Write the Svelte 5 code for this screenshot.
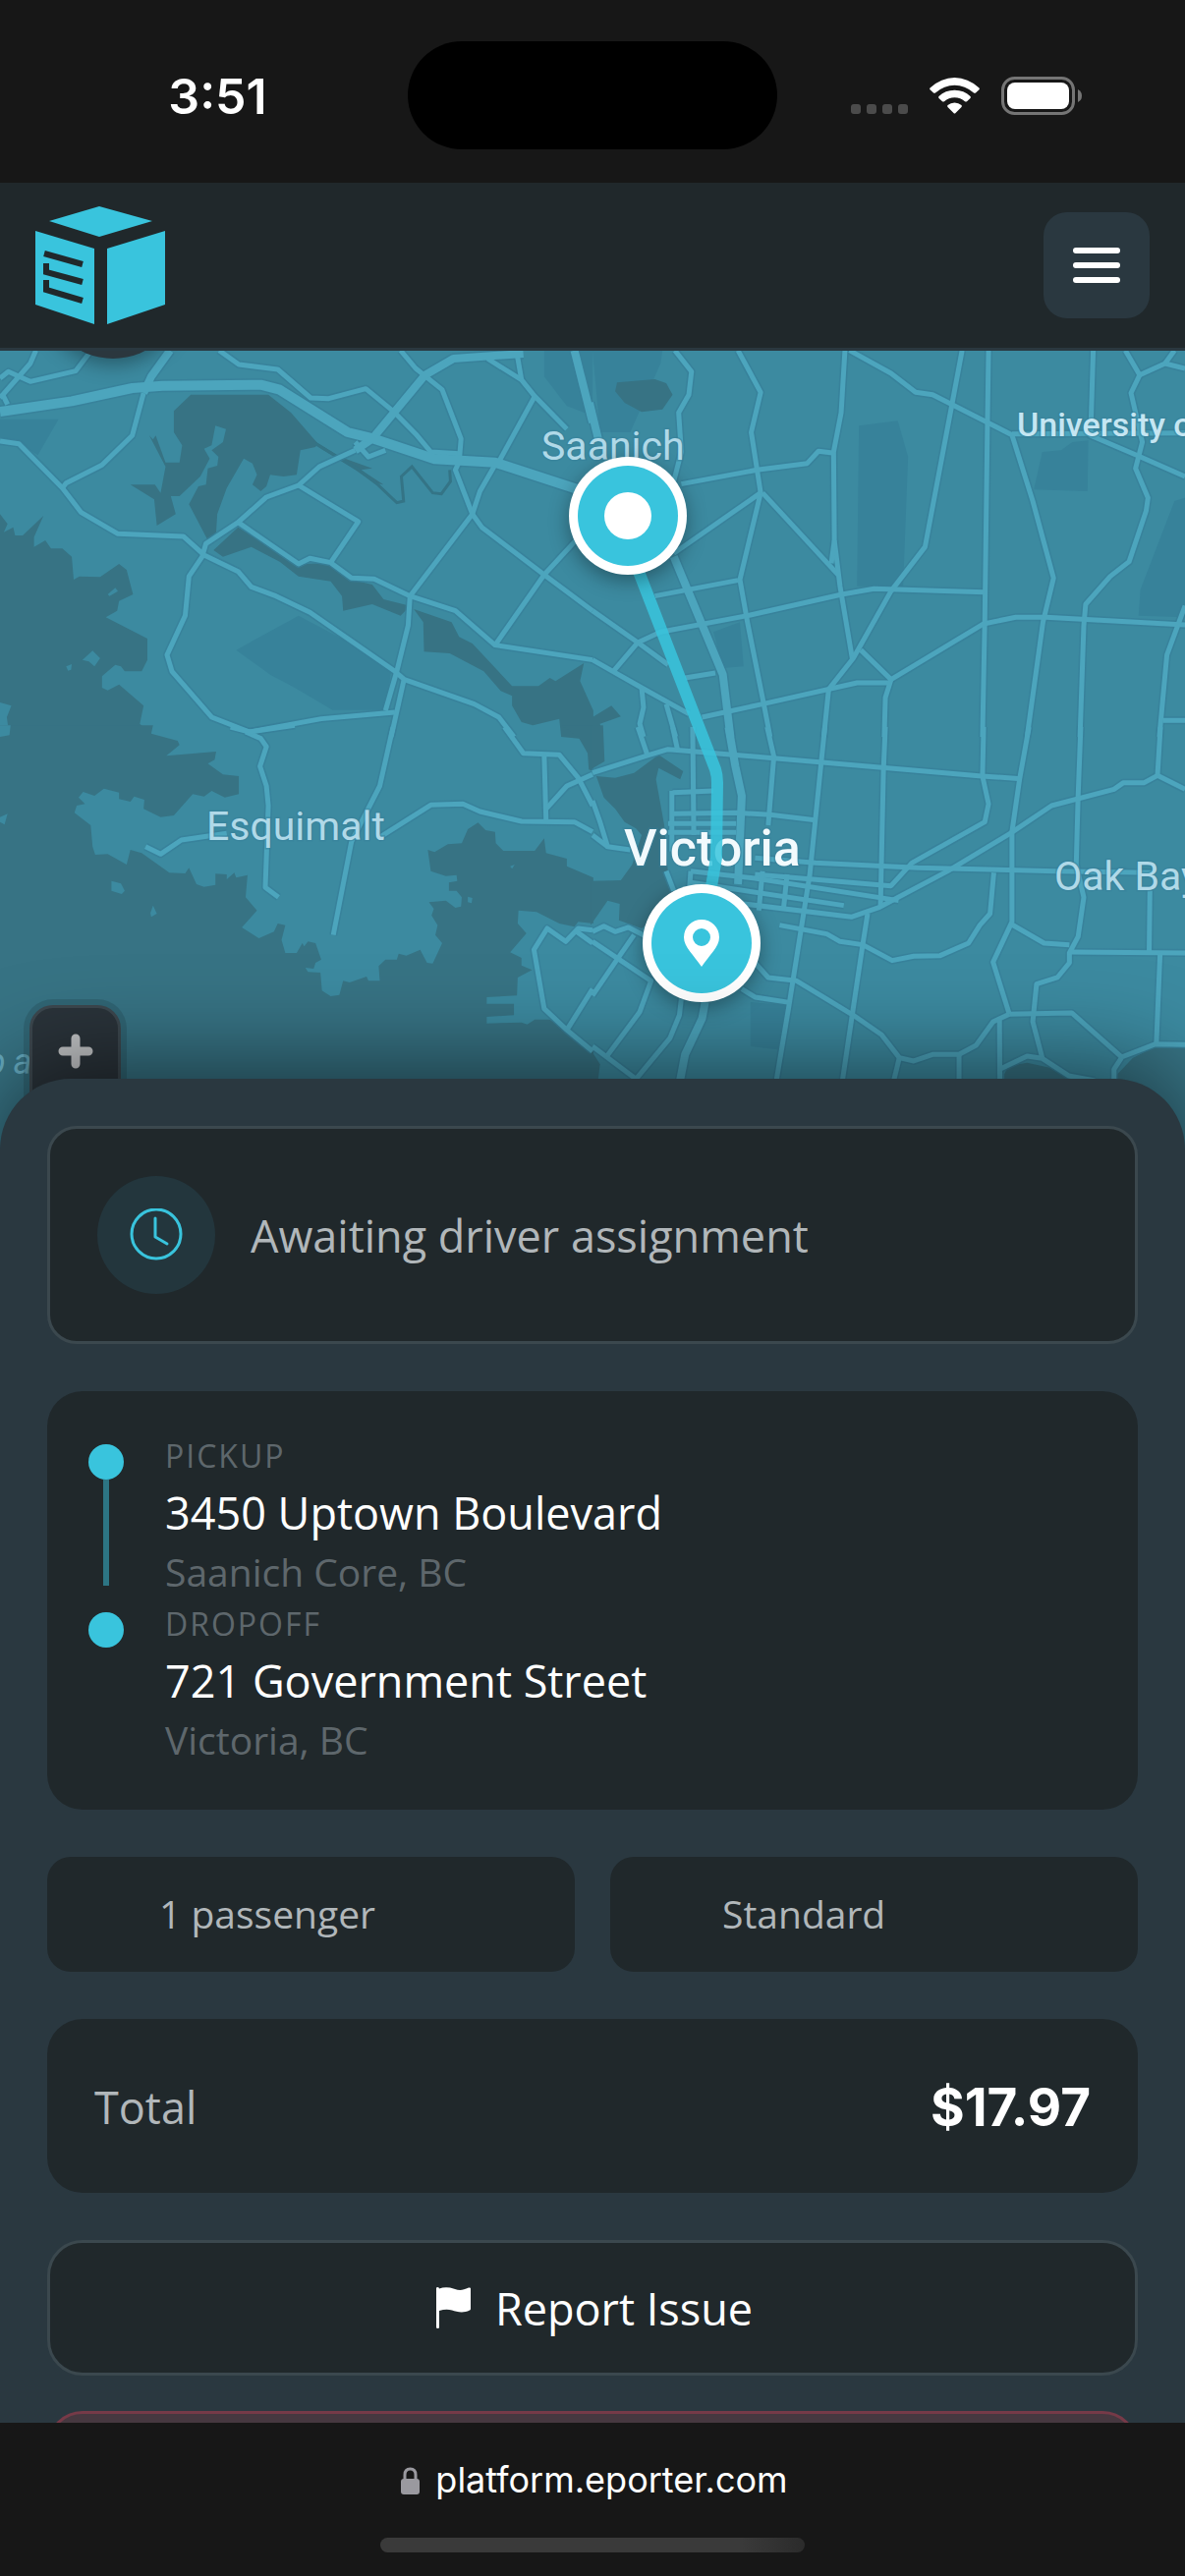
<script>
// the map is stored as tiles, each with its own grid (2.6 x 3 units per pixel)
const tiles = [
    {
        x: 0, y: -7,
        water: [
            "505,155 460,205 460,270 482,310 475,362 438,362 412,280 405,292 395,280 438,375 425,455 410,430 345,430 408,475 415,555 465,520 452,465 475,465 530,405 555,350 540,320 560,310 570,250 598,260 590,300 560,325 578,345 575,372 550,380 545,430 525,435 500,490 550,600 572,575 575,520 600,440 645,350 668,365 680,400 668,430 690,450 705,435 715,400 750,405 785,400 795,325 835,315 840,303 770,210 710,155",
            "565,630 590,650 665,620 740,665 790,710 875,725 905,770 908,815 985,795 1060,830 1085,800 1015,780 985,735 930,720 870,670 790,672 630,560",
            "1095,810 1195,850 1215,895 1250,915 1355,1045 1425,1045 1455,1020 1470,1030 1545,975 1535,1030 1570,1120 1570,1210 1485,1200 1480,1145 1410,1165 1380,1155 1355,1105 1355,1075 1325,1060 1280,1000 1190,945 1122,940 1120,850",
            "0,520 20,550 10,575 35,560 40,585 60,585 115,525 90,590 90,620 120,600 135,625 165,625 190,650 195,720 210,710 265,712 315,672 335,690 352,765 315,785 310,815 280,835 390,900 390,965 375,1000 330,1000 320,985 305,980 270,1015 270,1050 285,1058 315,1040 380,1105 370,1160 410,1200 0,1200",
            "830,295 900,345 985,380 955,385 1015,430 990,425 940,385 850,320"
        ],
        creeks: ["835,305 950,385 1000,430 1050,485 1068,480 1062,405 1090,375 1145,455 1168,458 1192,420 1190,385"],
        islands: ["285,765 305,745 312,755 290,770", "218,965 245,937 265,960 250,985 235,970", "175,985 190,978 188,995 180,998", "0,1095 30,1105 18,1140 25,1200 0,1200"],
        parks: ["625,935 790,830 920,910 1035,1000 1020,1118 880,1118 780,1050 715,1010", "0,230 155,230 100,340 50,300 0,285", "1440,20 1568,20 1568,220 1500,190 1440,100"],
        highways: ["0,207 190,175 350,135 430,128 690,125 740,140 920,270 990,290 1150,352 1310,362 1570,460"],
        avenues: ["1385,30 1200,45 1125,95 985,290 940,325", "1520,20 1568,240", "450,20 400,100 380,150"],
        roads: [
            "95,20 80,60 0,165", "0,105 22,85 80,115 200,83 235,30", "5,150 20,185",
            "380,150 350,280 270,370 175,425 165,440",
            "0,297 50,305 165,440 215,515 312,580 485,588 540,645 630,695 665,742 730,770 820,820 1045,1000 1070,1025 1255,1100 1320,1140 1360,1200",
            "580,20 632,63 735,78 822,165 870,167 968,137 1040,205 1100,275 1140,330 1215,335",
            "940,325 845,375 790,432 705,468 630,545 545,610 535,650 500,710 490,830 442,950 455,1000 560,1140 660,1185",
            "1060,20 1100,75 1170,140 1220,290 1215,360 1205,385 1250,520 1275,560 1440,705 1568,815",
            "1290,45 1380,110 1415,160 1500,260", "1368,30 1380,110", "1415,160 1320,360",
            "1310,370 1270,450 1250,520 1085,770 1080,860 1050,1000 1020,1120",
            "1085,770 1205,815 1310,920 1568,965", "1310,920 1440,705 1568,545",
            "630,545 790,672 820,655 875,668 930,715 990,718 1085,770",
            "790,432 948,543 875,668", "1070,1020 1035,1200", "660,1185 850,1145 1045,1125", "940,300 975,345 1020,325"
        ]
    },
    {
        x: 603, y: -7,
        water: ["65,118 165,108 195,120 212,155 185,200 130,208 85,180 60,145", "0,1140 50,1105 75,1138 20,1160 25,1200 0,1200"],
        creeks: [],
        islands: [],
        parks: ["705,250 808,235 835,345 822,740 700,740", "1190,330 1240,325 1270,300 1312,295 1310,450 1168,445", "1540,480 1568,470 1568,835 1445,830 1450,750", "320,880 390,850 400,985 345,990", "0,20 185,20 180,60 100,270 20,270"],
        highways: [],
        avenues: ["215,650 345,1010 365,1200", "-8,180 15,290"],
        roads: [
            "218,20 262,85 255,155 228,210 235,330 215,420",
            "385,20 445,148 420,270 445,455 390,720 410,850 455,1110 470,1200",
            "235,428 435,385 568,365 598,328 635,333", "445,455 215,640", "450,455 650,705",
            "668,20 658,210 638,330 640,600 655,740 688,965", "640,600 632,670",
            "680,20 790,90 855,148 900,155 1045,240 1110,278 1165,480 1220,715 1192,850 1150,1200",
            "978,20 952,180 880,620 790,755 690,960 625,1055 612,1200",
            "1048,20 1045,250 1038,850 1032,1200", "1325,20 1318,280 1450,345 1568,405",
            "1410,20 1448,95 1425,150 1455,300 1437,380 1470,470 1465,510 1420,665 1370,710 1305,795 1300,860 1290,1200",
            "1448,95 1515,60 1568,75", "1515,60 1540,20", "1110,275 1568,272", "165,770 385,722",
            "0,965 130,1050 255,1130", "0,815 120,912 200,980",
            "55,1000 120,912 180,880 410,830 660,765 745,748 1035,758", "245,1020 325,1005",
            "290,1140 450,1100 700,1035 785,1035", "710,935 790,1025 1035,855 1120,835 1200,835 1568,858",
            "790,1025 775,1080 772,1200", "130,1050 135,1110 125,1160 135,1200", "195,1100 220,1200",
            "1568,800 1520,950 1500,1200", "1510,1150 1568,1150"
        ]
    },
    {
        x: 0, y: 383,
        water: [
            "0,-5 405,-5 400,20 470,42 475,55 440,88 572,75 568,100 550,112 590,145 632,150 632,205 595,215 560,195 540,212 510,205 460,270 425,275 380,250 382,222 355,212 345,228 315,220 315,200 275,188 250,210 220,198 208,215 225,235 203,240 197,262 240,300 245,365 252,390 285,388 335,420 345,375 375,385 448,445 490,447 500,430 520,480 540,488 570,482 570,448 600,450 600,465 620,445 625,460 655,452 650,520 680,560 640,612 685,645 725,625 735,600 755,605 745,650 755,690 785,690 800,660 805,670 815,655 835,660 850,710 835,720 830,738 808,735 815,748 848,750 852,805 875,822 898,818 908,775 925,780 970,762 975,775 1005,775 1002,730 1020,710 1050,710 1055,692 1075,698 1112,680 1130,720 1145,722 1170,660 1152,635 1158,605 1142,575 1148,555 1135,535 1180,530 1205,552 1220,548 1222,520 1208,500 1188,500 1188,475 1210,470 1208,452 1180,455 1140,440 1132,375 1150,382 1185,358 1222,355 1238,312 1265,292 1285,315 1310,320 1312,355 1332,378 1415,378 1440,340 1445,385 1500,402 1500,425 1570,460 1570,600 1530,595 1520,610 1480,600 1420,565 1372,560 1370,600 1393,630 1350,688 1380,705 1380,728 1408,742 1370,765 1368,820 1288,825 1288,845 1360,845 1360,880 1288,885 1288,905 1380,902 1395,908 1415,893 1455,893 1570,990 1570,1320 0,1320",
            "1485,-5 1530,30 1555,80 1558,130 1570,135 1570,-5"
        ],
        creeks: [],
        islands: ["295,470 320,478 330,500 322,510 295,500", "405,545 415,570 400,580 398,568", "0,275 20,265 12,298 0,290", "1350,425 1362,420 1355,433", "1238,518 1250,522 1248,538 1238,535", "0,-5 28,-5 25,25 0,30"],
        parks: [],
        highways: [],
        avenues: [],
        roads: [
            "650,15 690,35 705,60 688,120 705,180 710,240 702,490 737,520",
            "385,365 425,388 480,345 600,325", "1000,340 1140,238 1225,235 1270,258 1380,288 1520,290 1568,320",
            "1040,0 1005,180 930,350 882,635", "610,0 660,15 780,-5",
            "1335,0 1385,80 1480,85 1530,155 1568,240", "1440,85 1445,285", "1445,250 1500,180 1568,145",
            "1568,620 1530,615 1497,655 1448,615 1413,680 1440,860 1500,925 1568,990", "1500,925 1568,800", "1520,620 1568,660"
        ]
    },
    {
        x: 603, y: 383,
        water: [
            "-5,-5 28,-5 32,105 -5,130",
            "10,150 60,155 110,140 175,85 240,135 232,160 175,125 168,160 190,300 200,450 215,500 160,590 130,615 70,590 72,540 40,530 -5,605 -5,470 75,468 105,420 130,330 115,310 85,290 60,250 30,215",
            "1100,1035 1150,1025 1210,1040 1260,1075 1260,1200 1090,1200 1090,1060",
            "1385,1065 1430,1010 1500,970 1568,980 1568,1320 1385,1320",
            "-5,985 20,1030 15,1075 -5,1075"
        ],
        creeks: [],
        islands: [],
        parks: ["418,840 520,850 490,985 418,975"],
        highways: [],
        avenues: ["360,0 378,120 395,210 385,480", "298,840 290,890 245,1000 230,1090"],
        roads: [
            "0,140 150,85 200,68 480,95 1030,150 1135,158", "120,0 145,85", "212,0 225,70", "265,0 268,330",
            "462,0 480,90 465,300", "615,0 605,110 575,450 520,850 485,1090", "775,0 770,130 762,550",
            "1035,0 1032,150 1048,235 1038,290 845,415 790,485 430,450",
            "1155,0 1130,160 1110,320 1110,595 1060,718 1103,877",
            "1292,0 1285,210 1280,420 1300,520 1285,640 1262,690 1262,720 1230,765 1175,785 1165,900 1190,1010",
            "1503,0 1495,148 1568,190",
            "1495,148 1460,170 1405,170 1380,190 1215,240 1105,325 940,440 760,550 685,580 400,540",
            "212,200 320,195", "210,195 210,380", "215,265 380,262 470,268 595,285", "200,295 380,295", "200,322 380,322",
            "430,400 590,415 860,430 1225,440", "1225,440 1480,445", "260,440 430,462 810,530", "260,475 665,545",
            "450,440 440,560", "515,450 505,560", "260,440 255,520",
            "1062,445 1052,570 1025,605 995,660 920,698 850,700 793,713 715,665 655,655 620,632 495,605",
            "728,570 715,665 660,1090", "1475,500 1473,688", "1105,600 1195,660 1262,665", "1262,687 1568,690", "1502,690 1492,968",
            "1103,877 1268,873 1400,1008 1490,968 1568,970", "1400,1010 1380,1045 1380,1090",
            "1103,877 1060,900 1015,972 970,1000 900,1000 850,1020 812,1010 765,940 690,880 540,775 465,765 430,720",
            "812,1010 795,1090", "970,1000 970,1090", "1077,895 1078,1090", "1078,1045 1150,1005 1190,1012 1260,1065 1330,1080",
            "395,800 430,825 525,842", "0,225 20,290 40,365 100,375", "0,330 40,365", "195,440 215,500",
            "0,625 30,608 60,625 95,612 160,650", "0,655 155,775 125,870 35,1010", "110,635 65,710 0,820",
            "0,975 115,1075", "235,830 230,880 205,950 115,1075"
        ]
    }
]

const stops = [
    { label: "PICKUP", address: "3450 Uptown Boulevard", city: "Saanich Core, BC" },
    { label: "DROPOFF", address: "721 Government Street", city: "Victoria, BC" }
]
const details = ["1 passenger", "Standard"]
const place = (tile) => `translate(${tile.x} ${tile.y}) scale(0.3846 0.3333)`
</script>

<div class="screen">
    <div class="status">
        <span class="time">3:51</span>
        <span class="island"></span>
        <svg class="signals" viewBox="0 0 236 40" aria-hidden="true">
            <g fill="#4b4b4b">
                <rect x="0" y="28" width="10" height="10" rx="3" />
                <rect x="16" y="28" width="10" height="10" rx="3" />
                <rect x="32" y="28" width="10" height="10" rx="3" />
                <rect x="48" y="28" width="10" height="10" rx="3" />
            </g>
            <g fill="#fff">
                <path d="M80.500 11.500Q92 1 105.500 1T130.500 11.500Q131.300 12.400 130.500 13.300L127 16.500Q126 17.200 125 16.500Q116 8.700 105.500 8.700T86 16.500Q85 17.200 84 16.500L80.500 13.300Q79.700 12.400 80.500 11.500Z" />
                <path d="M89.500 20Q96 13.800 105.500 13.800T121.500 20Q122.300 21 121.500 21.900L118 25.200Q117 26 116 25.200Q111.500 21.300 105.500 21.300T95 25.200Q94 26 93 25.200L89.500 21.900Q88.700 21 89.500 20Z" />
                <path d="M98.500 29Q101.500 26.500 105.500 26.500T112.500 29Q113.300 30 112.500 30.900L106.500 37Q105.500 38 104.500 37L98.500 30.900Q97.700 30 98.500 29Z" />
                <rect x="159" y="6" width="63" height="27" rx="8" />
            </g>
            <rect x="154.500" y="1.500" width="72" height="36" rx="12" fill="none" stroke="#757575" stroke-width="3" />
            <path d="M231 13Q235 15 235 19.500T231 26Z" fill="#757575" />
        </svg>
    </div>

    <header>
        <a href="/" aria-label="eporter">
            <svg class="logo" viewBox="0 0 132 120">
                <g fill="#39c4dd">
                    <path d="M65 0L119 15L65 31L14 15Z" />
                    <path d="M0 25L60 43V120L0 100Z" />
                    <path d="M73 43L132 25V100L73 120Z" />
                </g>
                <g fill="none" stroke="#20282b" stroke-width="6">
                    <path d="M9 48L48 59" />
                    <path d="M11 58V67L48 77" />
                    <path d="M11 75V85L48 96" />
                </g>
            </svg>
        </a>
        <button class="menu" aria-label="Menu">
            <span></span>
            <span></span>
            <span></span>
        </button>
    </header>

    <main>
        <div class="map">
            <svg viewBox="0 0 1206 840" preserveAspectRatio="xMidYMin slice">
                <rect width="1206" height="840" fill="#3c8aa0" />
                {#each tiles as tile}
                    <g transform={place(tile)}>
                        {#each tile.parks as points}<polygon class="park" {points} />{/each}
                        {#each tile.water as points}<polygon class="water" {points} />{/each}
                        {#each tile.creeks as points}<polyline class="creek" {points} />{/each}
                        {#each tile.islands as points}<polygon class="land" {points} />{/each}
                    </g>
                {/each}
                {#each ["casing", "line"] as layer}
                    {#each tiles as tile}
                        <g class={layer} transform={place(tile)}>
                            {#each tile.roads as points}<polyline class="road" {points} />{/each}
                            {#each tile.avenues as points}<polyline class="avenue" {points} />{/each}
                            {#each tile.highways as points}<polyline class="highway" {points} />{/each}
                        </g>
                    {/each}
                {/each}

                <g class="places">
                    <text x="551" y="111">Saanich</text>
                    <text x="210" y="498">Esquimalt</text>
                    <text x="1073" y="549">Oak Bay</text>
                    <text class="campus" x="1035" y="87">University of</text>
                    <text class="city" x="635" y="524">Victoria</text>
                    <text class="sea" x="-14" y="736">ba</text>
                </g>

                <path class="route" d="M628 168L728 426Q730 432 730 440L729 516L714 603" />

                <circle class="lifted" cx="115" cy="-64" r="72" fill="#2b373e" />
                <g class="lifted">
                    <circle cx="639" cy="168" r="60" fill="#fff" />
                    <circle cx="639" cy="168" r="51" fill="#39c4dd" />
                    <circle cx="639" cy="168" r="24" fill="#fff" />
                </g>
                <g class="lifted">
                    <circle cx="714" cy="603" r="60" fill="#fff" />
                    <circle cx="714" cy="603" r="51" fill="#39c4dd" />
                </g>
                <path fill="#fff" fill-rule="evenodd" d="M714 627C706 615 696 607 696 597A18 18 0 0 1 732 597C732 607 722 615 714 627ZM714 588A9 9 0 1 0 714 606A9 9 0 1 0 714 588Z" />
            </svg>
            <button class="zoom" aria-label="Zoom in">
                <svg viewBox="0 0 36 36"><path d="M18 5V31M5 18H31" stroke="#c2c4c6" stroke-width="9" stroke-linecap="round" /></svg>
            </button>
        </div>

        <div class="sheet">
            <section class="card waiting">
                <span class="clock">
                    <svg viewBox="0 0 54 54" fill="none" stroke="#39c4dd" stroke-width="3">
                        <circle cx="27" cy="26" r="25" />
                        <path d="M26 10V29L38 36" stroke-linecap="round" stroke-linejoin="round" />
                    </svg>
                </span>
                <span>Awaiting driver assignment</span>
            </section>

            <section class="card trip">
                {#each stops as stop, i}
                    <div class="stop">
                        <div class="track">
                            <span class="dot"></span>
                            {#if i < stops.length - 1}<span class="thread"></span>{/if}
                        </div>
                        <div>
                            <div class="label">{stop.label}</div>
                            <div class="address">{stop.address}</div>
                            <div class="town">{stop.city}</div>
                        </div>
                    </div>
                {/each}
            </section>

            <div class="details">
                {#each details as detail}
                    <div class="detail">{detail}</div>
                {/each}
            </div>

            <section class="card total">
                <span>Total</span>
                <strong>$17.97</strong>
            </section>

            <div class="actions">
                <button class="report">
                    <svg viewBox="0 0 36 42" fill="#fff">
                        <path d="M0 1Q0 0 1.500 0T3 1.500Q8 -0.500 14 0.500C20 2 24 5 33 0.500Q35 0 35 1.500V22Q35 23 34 23.500C27 27 21 25 16 23.500Q10 22 3 24V41Q3 42 1.500 42T0 41Z" />
                    </svg>
                    Report Issue
                </button>
                <button class="cancel" aria-label="Cancel"></button>
            </div>
        </div>
    </main>

    <footer>
        <div class="url">
            <svg viewBox="0 0 20 28" aria-hidden="true">
                <rect x="0" y="12" width="19" height="16" rx="3" fill="#9a999f" />
                <path d="M4 13V8Q4 2 9.500 2T15 8V13" fill="none" stroke="#9a999f" stroke-width="3" />
            </svg>
            platform.eporter.com
        </div>
        <div class="handle"></div>
    </footer>
</div>

<style>
:global(body) {
    background: #171717;
}
.screen {
    display: flex;
    flex-direction: column;
    height: 100vh;
    overflow: hidden;
    font-family: "Open Sans", sans-serif;
    font-size: 45px;
    color: #fff;
}
.screen button {
    padding: 0;
    font: inherit;
    color: inherit;
    box-sizing: border-box;
}
svg {
    display: block;
}

/* phone status bar */
.status {
    display: grid;
    grid-template-columns: 1fr 376px 1fr;
    align-items: center;
    justify-items: center;
    height: 186px;
    flex-shrink: 0;
    background: #171717;
    font-family: Inter, sans-serif;
}
.island {
    width: 100%;
    height: 110px;
    margin-top: 8px;
    border-radius: 55px;
    background: #000;
}
.time {
    padding: 10px 0 0 28px;
    font-size: 50px;
    font-weight: 600;
}
.signals {
    width: 236px;
    height: 40px;
    margin: 10px 30px 0 0;
}

header {
    display: flex;
    align-items: center;
    justify-content: space-between;
    flex-shrink: 0;
    height: 168px;
    padding: 0 36px;
    background: #20282b;
    border-bottom: 3px solid #2a3840;
}
.logo {
    width: 132px;
    height: 120px;
}
.menu {
    display: flex;
    flex-direction: column;
    align-items: center;
    justify-content: center;
    gap: 9px;
    width: 108px;
    height: 108px;
    border: 0;
    border-radius: 24px;
    background: #2a3840;
}
.menu span {
    width: 48px;
    height: 6px;
    border-radius: 3px;
    background: #fff;
}

main {
    flex: 1;
    min-height: 0;
    overflow: hidden;
}

/* map */
.map {
    position: relative;
    height: 840px;
    overflow: hidden;
}
.map > svg {
    width: 100%;
    height: 100%;
}
.park {
    fill: #37829a;
}
.water {
    fill: #377384;
}
.land {
    fill: #3c8aa0;
}
.creek {
    fill: none;
    stroke: #347486;
    stroke-width: 3;
    vector-effect: non-scaling-stroke;
}
.casing polyline,
.line polyline {
    fill: none;
    stroke-linejoin: round;
    vector-effect: non-scaling-stroke;
}
.casing polyline {
    stroke: #37809a;
    stroke-opacity: 0.8;
}
.line polyline {
    stroke: #4ca5bd;
}
.casing .road {
    stroke-width: 8;
}
.casing .avenue {
    stroke-width: 11;
}
.casing .highway {
    stroke-width: 13;
}
.line .road {
    stroke-width: 5;
}
.line .avenue {
    stroke-width: 8;
}
.line .highway {
    stroke-width: 10;
}
.places {
    font-family: Roboto, sans-serif;
    font-size: 41px;
    font-weight: 400;
    fill: #b0d9e8;
    stroke: #37809a;
    stroke-width: 3;
    stroke-opacity: 0.5;
    paint-order: stroke;
}
.places .campus {
    font-size: 34px;
    font-weight: 500;
    fill: #c5e6f2;
}
.places .city {
    font-size: 52px;
    font-weight: 500;
    fill: #f2fafd;
}
.places .sea {
    font-size: 36px;
    font-style: italic;
    letter-spacing: 8px;
    fill: #66abc0;
    stroke: none;
}
.route {
    fill: none;
    stroke: #38c4dd;
    stroke-width: 12;
    stroke-linejoin: round;
    opacity: 0.85;
}
.lifted {
    filter: drop-shadow(0 6px 10px rgba(0, 0, 0, 0.35));
}
.zoom {
    position: absolute;
    left: 30px;
    top: 666px;
    display: flex;
    justify-content: center;
    width: 93px;
    height: 174px;
    border: 3px solid #3c474e;
    border-radius: 24px;
    background: #2a333a;
    box-shadow: 0 0 0 6px rgba(0, 0, 0, 0.12);
}
.zoom svg {
    width: 36px;
    height: 36px;
    margin-top: 26px;
}

/* bottom sheet over the map */
.sheet {
    position: relative;
    display: flex;
    flex-direction: column;
    gap: 48px;
    margin-top: -99px;
    padding: 48px;
    border-radius: 72px 72px 0 0;
    background: #2a3840;
    box-shadow: 0 -12px 96px rgba(0, 0, 0, 0.55);
}
.card {
    border-radius: 36px;
    background: #20282b;
}
.waiting {
    display: flex;
    align-items: center;
    gap: 36px;
    padding: 48px;
    border: 3px solid #3b484e;
    border-radius: 30px;
    color: #b1b7ba;
}
.clock {
    display: grid;
    place-items: center;
    width: 120px;
    height: 120px;
    border-radius: 50%;
    background: #23363d;
}
.clock svg {
    width: 54px;
    height: 54px;
}
.trip {
    padding: 42px;
}
.stop {
    display: flex;
    gap: 42px;
    padding-bottom: 4px;
}
.track {
    display: flex;
    flex-direction: column;
    align-items: center;
    width: 36px;
    padding-top: 12px;
}
.dot {
    width: 36px;
    height: 36px;
    border-radius: 50%;
    background: #39c4dd;
}
.thread {
    width: 6px;
    height: 108px;
    background: #2d7584;
}
.label {
    font-size: 32px;
    line-height: 48px;
    letter-spacing: 2px;
    color: #5e676c;
}
.address {
    line-height: 68px;
}
.town {
    font-size: 39px;
    line-height: 51px;
    color: #5e676c;
}
.details {
    display: grid;
    grid-template-columns: 1fr 1fr;
    gap: 36px;
}
.detail {
    padding: 0 36px 2px 114px;
    border-radius: 24px;
    background: #20282b;
    font-size: 39px;
    line-height: 115px;
    color: #b1b7ba;
}
.total {
    display: flex;
    align-items: center;
    justify-content: space-between;
    height: 175px;
    padding: 2px 48px 0;
    color: #b1b7ba;
}
.total strong {
    font-family: Inter, sans-serif;
    font-size: 53px;
    font-weight: 700;
    color: #fff;
}
.actions {
    display: flex;
    flex-direction: column;
    gap: 36px;
}
.actions button {
    display: flex;
    align-items: center;
    justify-content: center;
    gap: 24px;
    height: 138px;
    border: 3px solid #3b484e;
    border-radius: 36px;
    background: #20282b;
}
.actions .report {
    padding-left: 4px;
}
.actions .cancel {
    border-color: #763a48;
    background: #463840;
}
.report svg {
    width: 36px;
    height: 42px;
}

/* browser bar */
footer {
    display: flex;
    flex-direction: column;
    align-items: center;
    justify-content: space-between;
    flex-shrink: 0;
    height: 156px;
    box-sizing: border-box;
    padding: 36px 0 24px;
    background: #171717;
    font-family: Inter, sans-serif;
    font-size: 36px;
    line-height: 45px;
}
.url {
    display: flex;
    align-items: center;
    gap: 15px;
    padding-left: 4px;
}
.url svg {
    width: 20px;
    height: 28px;
}
.handle {
    width: 432px;
    height: 15px;
    border-radius: 8px;
    background: linear-gradient(90deg, #3a3a3a 85%, #2b2b2b);
}
</style>
